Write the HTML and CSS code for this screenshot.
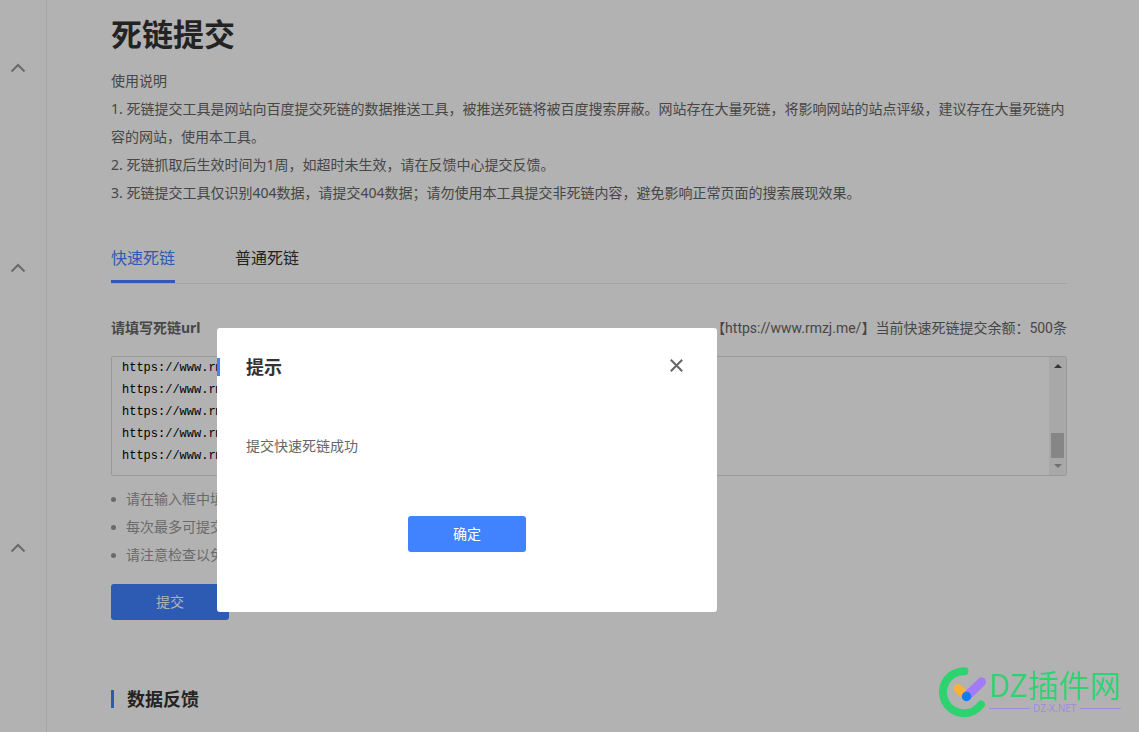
FILE: index.html
```html
<!DOCTYPE html>
<html lang="zh-CN">
<head>
<meta charset="utf-8">
<title>死链提交</title>
<link rel="stylesheet" href="styles.css">
</head>
<body>
<div class="page">
  <nav class="sidebar" aria-label="导航">
    <section class="nav-group"><button class="fold" type="button" aria-label="收起"><svg width="16" height="10" viewBox="0 0 16 10"><path d="M1.5 8.5 8 2l6.500 6.500"/></svg></button></section>
    <section class="nav-group nav-group-tall"><button class="fold" type="button" aria-label="收起"><svg width="16" height="10" viewBox="0 0 16 10"><path d="M1.5 8.5 8 2l6.500 6.500"/></svg></button></section>
    <section class="nav-group-last"><button class="fold" type="button" aria-label="收起"><svg width="16" height="10" viewBox="0 0 16 10"><path d="M1.5 8.5 8 2l6.500 6.500"/></svg></button></section>
  </nav>
  <main class="content">
    <h1 class="title">死链提交</h1>
    <div class="intro">
      <p>使用说明</p>
      <p>1. 死链提交工具是网站向百度提交死链的数据推送工具，被推送死链将被百度搜索屏蔽。网站存在大量死链，将影响网站的站点评级，建议存在大量死链内容的网站，使用本工具。</p>
      <p>2. 死链抓取后生效时间为1周，如超时未生效，请在反馈中心提交反馈。</p>
      <p>3. 死链提交工具仅识别404数据，请提交404数据；请勿使用本工具提交非死链内容，避免影响正常页面的搜索展现效果。</p>
    </div>
    <div class="tabs">
      <button class="tab tab-active" type="button">快速死链</button>
      <button class="tab" type="button">普通死链</button>
    </div>
    <div class="form-head">
      <label class="form-label" for="urls">请填写死链url</label>
      <span class="balance">【https://www.rmzj.me/】当前快速死链提交余额：500条</span>
    </div>
    <div class="url-box">
      <textarea class="urls" id="urls" rows="5">https://www.rmzj.me/
https://www.rmzj.me/
https://www.rmzj.me/
https://www.rmzj.me/
https://www.rmzj.me/</textarea>
      <div class="scrollbar" aria-hidden="true">
        <span class="arrow-up"></span>
        <span class="thumb"></span>
        <span class="arrow-down"></span>
      </div>
    </div>
    <ul class="tips">
      <li>请在输入框中填</li>
      <li>每次最多可提交</li>
      <li>请注意检查以免</li>
    </ul>
    <button class="btn" type="button">提交</button>
    <h2 class="section-title">数据反馈</h2>
  </main>
</div>
<div class="mask">
  <div class="dialog" role="dialog" aria-modal="true" aria-labelledby="dialog-title">
    <header class="dialog-head">
      <h2 class="dialog-title" id="dialog-title">提示</h2>
      <button class="close" type="button" aria-label="关闭"><svg width="13" height="13" viewBox="0 0 13 13"><path d="M.8.8 12.2 12.2M12.2.8.8 12.2"/></svg></button>
    </header>
    <p class="dialog-text">提交快速死链成功</p>
    <div class="dialog-foot"><button class="btn" type="button">确定</button></div>
  </div>
</div>
<div class="watermark">
  <svg width="48" height="52" viewBox="0 0 48 52" fill="none" stroke-linecap="round">
    <path d="M25.500 5.200A21 21 0 1 0 42 38.500" stroke="#2dd36f" stroke-width="8"/>
    <path d="M19 22.500 27 30" stroke="#f9b233" stroke-width="9"/>
    <path d="M27.500 30.500 42.500 16" stroke="#a17bfa" stroke-width="9"/>
    <circle cx="27.500" cy="30.500" r="4.700" fill="#107cf2"/>
  </svg>
  <div class="brand">
    <span class="brand-name">DZ插件网</span>
    <span class="brand-site">DZ-X.NET</span>
  </div>
</div>
</body>
</html>
```

FILE: styles.css
```css
* { box-sizing: border-box; }
body {
  margin: 0;
  background: #fff;
  color: #666;
  font: 14px/28px "Noto Sans", "Noto Sans CJK SC", sans-serif;
  text-spacing-trim: space-all;
}
h1, h2, p, ul { margin: 0; padding: 0; }
button { font: inherit; border: 0; padding: 0; background: none; }
.page { display: flex; height: 100vh; overflow: hidden; }
.sidebar { flex: 0 0 47px; border-right: 1px solid #ededed; padding-top: 48px; }
.nav-group { height: 200px; }
.nav-group-tall { height: 280px; }
.fold { display: flex; align-items: center; height: 40px; padding-left: 10px; }
.fold path { fill: none; stroke: #999; stroke-width: 2; }
.content { flex: 1; min-width: 0; padding: 13px 72px 0 64px; }
.title { font-size: 31px; line-height: 42px; color: #333; margin-bottom: 12px; }
.tabs { display: flex; gap: 60px; margin-top: 28px; border-bottom: 1px solid #ededed; }
.tab { height: 48px; font-size: 16px; color: #333; border-bottom: 3px solid transparent; }
.tab-active { color: #4182ff; border-bottom-color: #4182ff; }
.form-head { display: flex; justify-content: space-between; margin-top: 30px; }
.form-label { font-weight: bold; }
.balance { font-family: Roboto, "Noto Sans CJK SC", sans-serif; }
.url-box {
  display: flex;
  height: 120px;
  margin-top: 14px;
  border: 1px solid #dcdcdc;
  border-radius: 2px;
  overflow: hidden;
}
.urls {
  flex: 1;
  min-width: 0;
  border: 0;
  padding: 0 10px;
  resize: none;
  overflow: hidden;
  outline: none;
  background: transparent;
  color: #000;
  font: 12px/22px "Liberation Mono", monospace;
}
.scrollbar {
  flex: 0 0 17px;
  display: flex;
  flex-direction: column;
  align-items: center;
  padding: 7px 0;
  background: #f1f1f1;
}
.arrow-up { border: 4px solid transparent; border-top: 0; border-bottom-color: #505050; }
.arrow-down { border: 4px solid transparent; border-bottom: 0; border-top-color: #a3a3a3; margin-top: 6px; }
.thumb { width: 13px; height: 25px; margin-top: auto; background: #c1c1c1; }
.tips { list-style: none; margin-top: 9px; color: #999; }
.tips li { display: flex; align-items: center; gap: 10px; }
.tips li::before { content: ""; width: 5px; height: 5px; border-radius: 50%; background: #999; }
.btn { width: 118px; height: 36px; border-radius: 3px; background: #4182ff; color: #fff; }
.content > .btn { display: block; margin-top: 15px; }
.section-title, .dialog-title {
  display: flex;
  align-items: center;
  font-size: 18px;
  line-height: 28px;
  color: #333;
}
.section-title { gap: 13px; margin-top: 65px; }
.dialog-title { gap: 26px; }
.section-title::before, .dialog-title::before { content: ""; width: 3px; height: 18px; background: #4182ff; }
.mask { position: fixed; inset: 0; background: rgba(0, 0, 0, .3); }
.dialog {
  position: absolute;
  left: 217px;
  top: 328px;
  width: 500px;
  padding: 25px 0 60px;
  border-radius: 3px;
  background: #fff;
}
.dialog-head { display: flex; justify-content: space-between; align-items: center; padding-right: 34px; }
.close { display: flex; padding-bottom: 4px; }
.close path { fill: none; stroke: #666; stroke-width: 2; }
.dialog-text { margin: 51px 29px 56px; }
.dialog-foot { display: flex; justify-content: center; }
.watermark { position: fixed; right: 18px; bottom: 14px; display: flex; gap: 2px; }
.brand { display: flex; flex-direction: column; }
.brand-name { font: 31px/36px "Noto Sans CJK SC", sans-serif; color: #2dd36f; font-weight: 350; }
.brand-site { display: flex; align-items: center; gap: 3px; font-size: 10px; line-height: 12px; color: #a08be0; }
.brand-site::before, .brand-site::after { content: ""; flex: 1; height: 1px; background: #a08be0; }
```
